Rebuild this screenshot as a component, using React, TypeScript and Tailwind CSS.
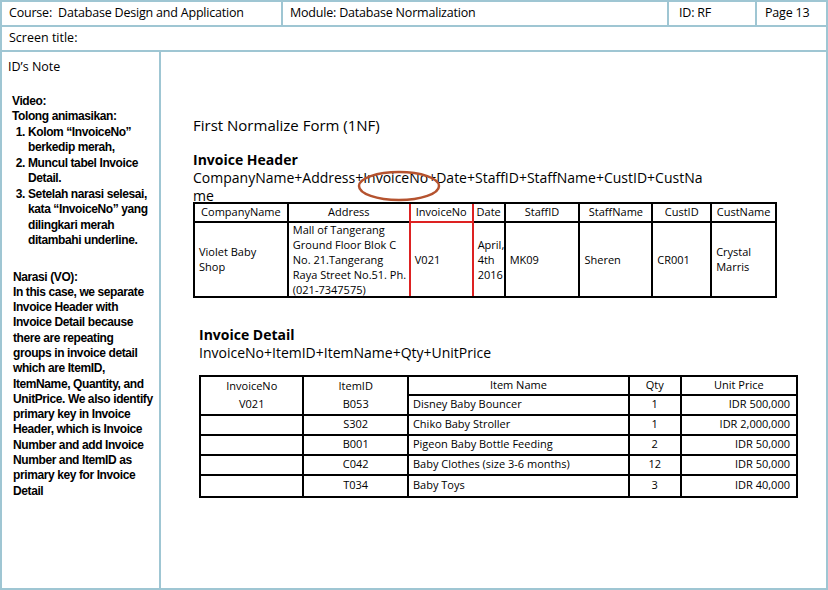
import React from "react";

const B = "border-[#9fc6d3]";
const F = { fontFamily: '"Open Sans",Arial,sans-serif' };
const L = { fontFamily: '"Liberation Sans",Arial,sans-serif' };

export default function App() {
  const hdrCols = [
    { w: 94, h: "CompanyName", v: "Violet Baby\nShop" },
    { w: 122, h: "Address", v: "Mall of Tangerang\nGround Floor Blok C\nNo. 21.Tangerang\nRaya Street No.51. Ph.\n(021-7347575)" },
    { w: 65, h: "InvoiceNo", v: "V021", red: true },
    { w: 32, h: "Date", v: "April,\n4th\n2016" },
    { w: 75, h: "StaffID", v: "MK09" },
    { w: 73, h: "StaffName", v: "Sheren" },
    { w: 59, h: "CustID", v: "CR001" },
    { w: 63, h: "CustName", v: "Crystal\nMarris" },
  ];
  const rows = [
    ["V021", "B053", "Disney Baby Bouncer", "1", "IDR 500,000"],
    ["", "S302", "Chiko Baby Stroller", "1", "IDR 2,000,000"],
    ["", "B001", "Pigeon Baby Bottle Feeding", "2", "IDR 50,000"],
    ["", "C042", "Baby Clothes (size 3-6 months)", "12", "IDR 50,000"],
    ["", "T034", "Baby Toys", "3", "IDR 40,000"],
  ];
  const dw = [104, 105, 222, 52, 115];
  return (
    <div className="w-[828px] h-[590px] bg-white text-black overflow-hidden flex flex-col" style={F}>
      <div className={`flex h-[27px] border-2 ${B} text-[12.5px] tracking-[-0.2px]`}>
        <div className={`w-[281px] border-r-2 ${B} flex items-center pl-[7px]`}>Course:&nbsp; Database Design and Application</div>
        <div className={`w-[386px] border-r-2 ${B} flex items-center pl-[7px]`}>Module: Database Normalization</div>
        <div className={`w-[88px] border-r-2 ${B} flex items-center pl-[10px]`}>ID: RF</div>
        <div className="flex-1 flex items-center pl-[8px]">Page 13</div>
      </div>
      <div className={`h-[25px] border-x-2 border-b-2 ${B} flex items-center pl-[7px] text-[12.5px]`}>Screen title:</div>
      <div className="flex flex-1 min-h-0">
        <div className={`w-[161px] border-x-2 border-b-2 ${B} text-[12px] leading-[15.5px] pl-[6px] pr-[6px]`}>
          <div className="mt-[7px] text-[12.5px]">ID’s Note</div>
          <div className="mt-[19px] pl-[4px] font-semibold tracking-[-0.4px]" style={{ ...L, fontWeight: 600 }}>
            <div>Video:</div>
            <div>Tolong animasikan:</div>
            <ol className="list-decimal pl-[16px]">
              <li>Kolom “InvoiceNo” berkedip merah,</li>
              <li>Muncul tabel Invoice Detail.</li>
              <li>Setelah narasi selesai, kata “InvoiceNo” yang dilingkari merah ditambahi underline.</li>
            </ol>
          </div>
          <div className="mt-[21px] pl-[5px] leading-[15.3px] tracking-[-0.4px]" style={{ ...L, fontWeight: 600 }}>
            <div>Narasi (VO):</div>
            <div>In this case, we separate Invoice Header with Invoice Detail because there are repeating groups in invoice detail which are ItemID, ItemName, Quantity, and UnitPrice. We also identify primary key in Invoice Header, which is Invoice Number and add Invoice Number and ItemID as primary key for Invoice Detail</div>
          </div>
        </div>
        <div className={`flex-1 border-r-2 border-b-2 ${B} relative pl-[32px]`}>
          <div className="mt-[62px]" style={{ fontSize: 15 }}>First Normalize Form (1NF)</div>
          <div className="mt-[14px] text-[14px] font-bold leading-[18px]">Invoice Header</div>
          <div className="w-[522px] text-[14px] leading-[18px] break-all">CompanyName+Address+InvoiceNo+Date+StaffID+StaffName+CustID+CustName</div>
          <svg className="absolute left-[193px] top-[116px]" width="90" height="36"><ellipse cx="45" cy="18" rx="40" ry="14" fill="none" stroke="#b5532f" strokeWidth="2.5" /></svg>
          <div className="flex border-2 border-black w-[584px] text-[11px] mt-[-3px]">
            {hdrCols.map((c, i) => (
              <div key={i} className={`flex flex-col ${i < 7 ? "border-r-2" : ""} ${c.red ? "border-x-2 border-[#d22] -ml-[2px]" : "border-black"}`} style={{ width: c.w }}>
                <div className={`h-[19px] flex items-center justify-center border-b-2 ${c.red ? "border-[#d22]" : "border-black"}`}>{c.h}</div>
                <div className="h-[73px] flex items-center px-[4px] whitespace-pre leading-[15px]">{c.v}</div>
              </div>
            ))}
          </div>
          <div className="mt-[28px] ml-[6px] text-[14px] font-bold leading-[18px]">Invoice Detail</div>
          <div className="ml-[6px] text-[14px] leading-[18px]">InvoiceNo+ItemID+ItemName+Qty+UnitPrice</div>
          <div className="ml-[6px] mt-[13px] w-[599px] border-2 border-black text-[11px]">
            <div className="flex h-[19px]">
              {["InvoiceNo", "ItemID", "Item Name", "Qty", "Unit Price"].map((h, i) => (
                <div key={i} className={`flex items-center justify-center ${i < 4 ? "border-r-2 border-black" : ""} ${i >= 2 ? "border-b-2 border-black" : ""}`} style={{ width: dw[i] }}>{h}</div>
              ))}
            </div>
            {rows.map((r, ri) => (
              <div key={ri} className={`flex h-[20px] ${ri < 4 ? "border-b-2 border-black" : ""}`}>
                {r.map((v, i) => (
                  <div key={i} className={`flex items-center ${i < 4 ? "border-r-2 border-black" : ""} ${i === 2 ? "pl-[4px]" : i === 4 ? "justify-end pr-[6px]" : "justify-center"}`} style={{ width: dw[i] }}>{v}</div>
                ))}
              </div>
            ))}
          </div>
        </div>
      </div>
    </div>
  );
}
